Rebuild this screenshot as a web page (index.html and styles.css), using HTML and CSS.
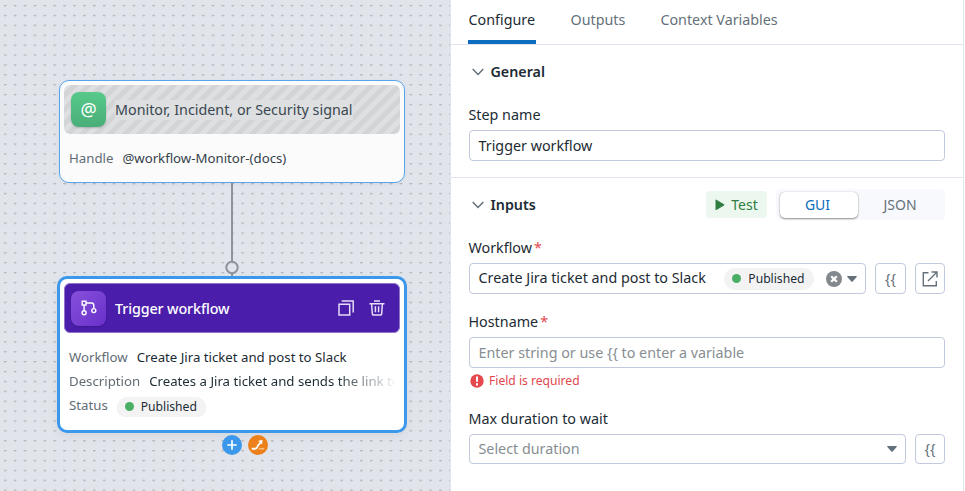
FILE: index.html
```html
<!DOCTYPE html>
<html lang="en">
<head>
<meta charset="utf-8">
<title>Workflow editor</title>
<link rel="stylesheet" href="styles.css">
</head>
<body>
<div class="app">
  <main class="canvas">
    <svg class="edge" width="16" height="96" viewBox="0 0 16 96" fill="none" stroke="#8f929d" stroke-width="2"><path d="M8 0v79M8 91v3"/><circle cx="8" cy="85.500" r="5.700"/></svg>
    <section class="node node-signal">
      <header class="node-head striped">
        <span class="tile green">@</span>
        <span class="node-title">Monitor, Incident, or Security signal</span>
      </header>
      <div class="node-row"><span class="key">Handle</span><span class="val">@workflow-Monitor-(docs)</span></div>
    </section>
    <section class="node node-trigger">
      <header class="node-head purple">
        <span class="tile violet"><svg width="18" height="18" viewBox="0 0 18 18" fill="none" stroke="#fff" stroke-width="1.400"><rect x="2.200" y="2.200" width="3.800" height="3.800"/><path d="M4.100 6v5.500M6 4h5.500q2.300 0 2.300 2.300v3"/><circle cx="4.100" cy="13.800" r="2"/><circle cx="13.800" cy="11.600" r="2"/></svg></span>
        <span class="node-title strong">Trigger workflow</span>
        <span class="head-actions">
          <svg width="18" height="18" viewBox="0 0 18 18" fill="none" stroke="#e6dcf7" stroke-width="1.500"><path d="M2 5.200h10.700V16H2zM4.700 2h11.500v11.500"/></svg>
          <svg width="18" height="18" viewBox="0 0 18 18" fill="none" stroke="#e6dcf7" stroke-width="1.500"><path d="M1.500 4.800h15M6 2h6M3.600 4.800l.7 9.800q.1 1.500 1.500 1.500h6.400q1.400 0 1.500-1.500l.7-9.800M7.400 7.300v6M10.600 7.300v6"/></svg>
        </span>
      </header>
      <div class="node-body">
        <div class="node-row"><span class="key">Workflow</span><span class="val">Create Jira ticket and post to Slack</span></div>
        <div class="node-row fade"><span class="key">Description</span><span class="val">Creates a Jira ticket and sends the link to</span></div>
        <div class="node-row status"><span class="key">Status</span><span class="pill clipped"><i class="dot"></i>Published</span></div>
      </div>
    </section>
    <svg class="badge badge-add" width="20" height="20" viewBox="0 0 20 20"><circle cx="10" cy="10" r="10" fill="#3c98ea"/><path d="M10 5.300v9.400M5.300 10h9.400" stroke="#fff" stroke-width="1.700"/></svg>
    <svg class="badge badge-path" width="20" height="20" viewBox="0 0 20 20"><circle cx="10" cy="10" r="10" fill="#ec811b"/><path d="M3.800 13.700h3.200c3.200 0 1.800-3.400 4.300-4.700l1.200-1.500" fill="none" stroke="#fff" stroke-width="1.900"/><path d="M10.200 5.800l4.300-.8-.4 4.400z" fill="#fff"/><path d="M10.700 13.700h5.500" stroke="#f5bd82" stroke-width="1.700"/></svg>
  </main>
  <aside class="panel">
    <nav class="tabs">
      <a class="tab active">Configure</a><a class="tab">Outputs</a><a class="tab">Context Variables</a>
    </nav>
    <section class="general">
      <h2 class="heading"><svg width="12" height="8" viewBox="0 0 12 8" fill="none" stroke="#626c75" stroke-width="1.400"><path d="M.7 1L6 6.500 11.300 1"/></svg>General</h2>
      <label class="label">Step name</label>
      <div class="field">Trigger workflow</div>
    </section>
    <section class="inputs">
      <div class="inputs-head">
        <h2 class="heading"><svg width="12" height="8" viewBox="0 0 12 8" fill="none" stroke="#626c75" stroke-width="1.400"><path d="M.7 1L6 6.500 11.300 1"/></svg>Inputs</h2>
        <button class="test"><svg width="10" height="12" viewBox="0 0 10 12"><path d="M.5 1.200Q.5.300 1.400.700L9 5.200q.8.600 0 1.200L1.400 11q-.9.400-.9-.6z" fill="#2f7d41"/></svg>Test</button>
        <div class="toggle"><span class="option on">GUI</span><span class="option">JSON</span></div>
      </div>
      <label class="label">Workflow<b class="req">*</b></label>
      <div class="line">
        <div class="field grow"><span class="select-text">Create Jira ticket and post to Slack</span><span class="pill"><i class="dot"></i>Published</span>
          <svg class="clear" width="16" height="16" viewBox="0 0 16 16"><circle cx="8" cy="8" r="8" fill="#83898d"/><path d="M5.200 5.200l5.600 5.600M10.800 5.200l-5.600 5.600" stroke="#fff" stroke-width="2.200"/></svg>
          <svg class="caret" width="10" height="6" viewBox="0 0 10 6"><path d="M.7 0h8.600q.9.200.3 1L5.700 5.500q-.7.700-1.400 0L.4 1Q-.2.200.7 0z" fill="#65717a"/></svg>
        </div>
        <button class="square">{{</button>
        <button class="square last"><svg width="16" height="16" viewBox="0 0 16 16" fill="none" stroke="#65717a" stroke-width="1.400"><path d="M6.500 1.700H1.300v13h13V10M9.500 1H15v5.500M15 1L6 10"/></svg></button>
      </div>
      <label class="label host">Hostname<b class="req">*</b></label>
      <div class="field placeholder">Enter string or use {{ to enter a variable</div>
      <div class="error"><svg width="14" height="14" viewBox="0 0 14 14"><circle cx="7" cy="7" r="6.700" fill="#e5484d"/><path d="M7 2.600v5.100M7 9.300v2.100" stroke="#fff" stroke-width="2"/></svg>Field is required</div>
      <label class="label">Max duration to wait</label>
      <div class="line">
        <div class="field grow placeholder short">Select duration<svg class="caret end" width="10" height="6" viewBox="0 0 10 6"><path d="M.7 0h8.600q.9.200.3 1L5.700 5.500q-.7.700-1.400 0L.4 1Q-.2.200.7 0z" fill="#65717a"/></svg></div>
        <button class="square short last">{{</button>
      </div>
    </section>
  </aside>
</div>
</body>
</html>
```
FILE: styles.css
```css
* { box-sizing: border-box; }
body { margin: 0; font: 14.320px/20px "Noto Sans", sans-serif; color: #1c2b34; background: #fff; }
.app { display: flex; width: 965px; height: 491px; overflow: hidden; }
.canvas {
  position: relative; width: 450px; flex: none;
  background: #e1e4eb radial-gradient(ellipse 1.600px 1.100px at 5.300px 5.600px, #b4b5b9 0, #b4b5b9 60%, transparent 100%) 0 0 / 9.900px 9.900px;
}
.node { position: absolute; background: #fff; border-radius: 10px; }
.node-signal { left: 59px; top: 79.500px; width: 345.500px; height: 103px; padding: 4px 3.500px 4px 4px; border: 1.500px solid #55a4ed; background: #fbfbfb; box-shadow: 0 1px 4px #0000000d; }
.node-trigger { left: 57px; top: 276px; width: 350px; height: 157px; padding: 4px; border: 3px solid #3c98ea; box-shadow: 0 4px 8px #0000000d; }
.node-head { display: flex; align-items: center; height: 49px; padding-left: 7px; border-radius: 6px; }
.striped { background: repeating-linear-gradient(135deg, #dddfe0 0 5px, #d3d4d6 5px 10px); }
.striped .node-title { background: #dddfe0; color: #3b4750; }
.purple { height: 50px; background: #4a1eab; border: 1px solid #8f74ca; padding-left: 6px; color: #fff; }
.node-title { margin-top: 1px; }
.tile { display: flex; align-items: center; justify-content: center; width: 35px; height: 35px; margin-right: 9px; border-radius: 8px; box-shadow: 0 1px 2px #0003; color: #fff; font-size: 18px; }
.green { background: linear-gradient(#57c98a, #4aae78); }
.violet { background: linear-gradient(135deg, #8650da, #6a30cb); }
.strong { font-weight: 500; letter-spacing: -.12px; }
.head-actions { display: flex; gap: 13px; margin-left: auto; padding-right: 13px; }
.node-row { display: flex; gap: 9px; height: 24px; padding-left: 5px; align-items: center; font-size: 13.220px; white-space: nowrap; }
.node-signal .node-row { margin-top: 12px; }
.node-signal .val { color: #35414a; }
.key { color: #626c75; }
.node-body { padding-top: 12px; }
.fade { width: 330px; mask-image: linear-gradient(90deg, #000 272px, transparent 334px); }
.status .key { margin-top: -1px; }
.pill { display: flex; align-items: center; gap: 7px; height: 22px; padding: 0 9px 0 8px; border-radius: 11px; background: #f3f3f4; font-size: 12.150px; line-height: 20px; }
.clipped { height: 20px; margin-top: 3px; border-radius: 10px 10px 8px 8px; }
.dot { width: 9px; height: 9px; border-radius: 50%; background: #4bae65; }
.edge { position: absolute; left: 224px; top: 182px; }
.badge { position: absolute; top: 435px; }
.badge-add { left: 222px; }
.badge-path { left: 248px; }
.panel { width: 514px; flex: none; border-left: 1px solid #e1e3ee; border-right: 1px solid #e1e3ee; }
.tabs { display: flex; gap: 34px; height: 45px; padding: 0 17px; border-bottom: 1px solid #e1e3ee; color: #65717a; }
.tab { height: 44px; padding: 10px .5px 0; }
.active { width: 68px; color: #1c2b34; border-bottom: 4px solid #0b6cc0; }
.general { height: 133px; padding: 17px 18px 0; border-bottom: 1px solid #e1e3ee; }
.heading { display: flex; align-items: center; gap: 6.500px; margin: 0; padding-left: 3px; font-size: 14.280px; line-height: 20px; font-weight: 600; }
.label { display: flex; height: 20px; margin: 0 0 5px -.5px; }
.general .label { margin-top: 23px; }
.field { display: flex; align-items: center; height: 31px; padding: 0 8.500px; border: 1px solid #c2c8de; border-radius: 4px; white-space: nowrap; }
.inputs { padding: 11px 18px 0; }
.inputs-head { display: flex; align-items: center; height: 31px; margin-bottom: 18px; }
button { font: inherit; padding: 0; }
.test { display: flex; align-items: center; justify-content: center; gap: 6px; width: 61px; height: 27px; margin: 0 9px 0 auto; border: 0; border-radius: 4px; background: #ebf7ef; color: #2f7d41; font-size: 14px; }
.toggle { display: flex; width: 169px; height: 31px; padding: 3px 3px 2px 4px; border-radius: 5px; background: #f8f9fc; }
.option { width: 84px; line-height: 26px; text-align: center; color: #65717a; font-size: 14px; }
.on { width: 78px; padding-right: 3px; border-radius: 5px; background: #fff; color: #0b6cc0; box-shadow: 0 1px 2px #0006, 0 0 1px #0005; }
.line { display: flex; }
.grow { flex: 1; }
.select-text { margin-top: -2px; }
.req { margin-left: 2px; font-weight: 400; color: #e5484d; }
.field .pill { margin-left: auto; }
.clear { margin-left: 12px; }
.caret { margin: 0 0 0 5px; }
.end { margin-left: auto; }
.square { display: flex; align-items: center; justify-content: center; width: 31px; height: 31px; margin-left: 9px; border: 1px solid #c2c8de; border-radius: 4px; background: #fff; color: #65717a; }
.last { width: 30px; }
.host { margin-top: 18px; }
.placeholder { color: #878e92; }
.error { display: flex; align-items: center; gap: 5px; height: 26px; margin-bottom: 15px; padding-left: 1px; color: #e0474c; font-size: 12.100px; }
.short { height: 30px; }
```
